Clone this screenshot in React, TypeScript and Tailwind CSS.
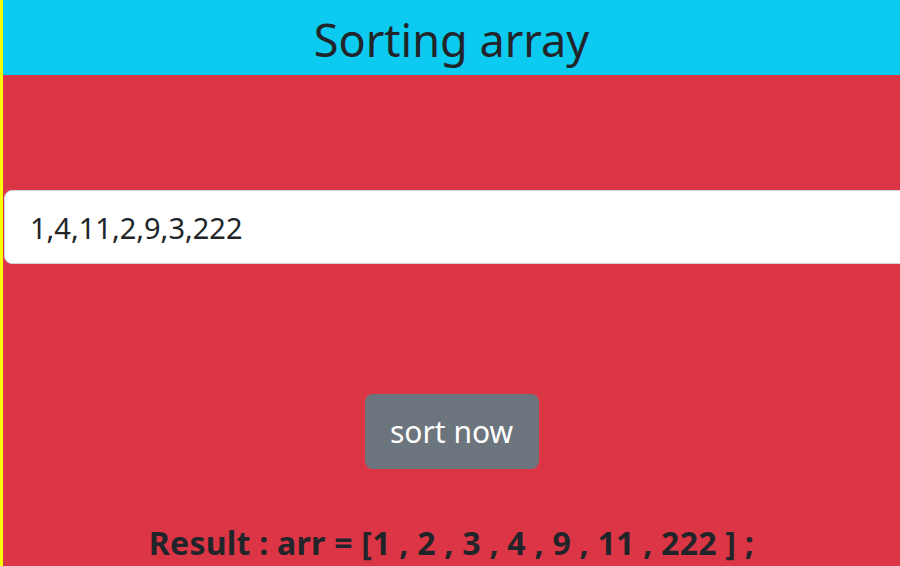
export default function App() {
  return (
    <div className="min-h-[566px] w-[900px] overflow-hidden border-l-[3px] border-[#ffff00] bg-[#dc3545] font-['Noto_Sans','Open_Sans',sans-serif] text-[#212529]">
      {/* header */}
      <div className="flex h-[75px] items-center justify-center bg-[#0dcaf0] pt-[3px]">
        <h1 className="text-[45px] leading-none">Sorting array</h1>
      </div>

      {/* input */}
      <div className="mt-[115px] pl-px">
        <input
          defaultValue="1,4,11,2,9,3,222"
          className="h-[74px] w-[910px] rounded-lg border border-[#ced4da] bg-white px-[25px] text-[29px] text-[#212529] outline-none"
        />
      </div>

      {/* button */}
      <div className="mt-[130px] flex justify-center">
        <button className="h-[75px] w-[174px] rounded-lg bg-[#6c757d] text-[30px] text-white">
          sort now
        </button>
      </div>

      {/* result */}
      <p className="mt-[58px] text-center text-[32px] font-bold leading-none tracking-[0.25px]">
        Result : arr = [1 , 2 , 3 , 4 , 9 , 11 , 222 ] ;
      </p>
    </div>
  )
}
